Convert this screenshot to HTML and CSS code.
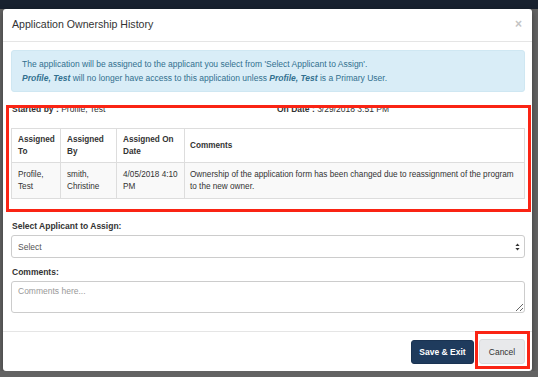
FILE: index.html
```html
<!DOCTYPE html>
<html lang="en">
<head>
    <meta charset="UTF-8">
    <meta name="viewport" content="width=device-width, initial-scale=1.0">
    <title>Application Ownership History</title>
    <link rel="stylesheet" href="styles.css">
</head>
<body>

<div class="page-top"></div>

<div class="modal">
    <div class="modal-header">
        <h1>Application Ownership History</h1>
        <span class="close">&times;</span>
    </div>

    <div class="modal-body">
        <div class="alert">
            The application will be assigned to the applicant you select from 'Select Applicant to Assign'.<br>
            <b><i>Profile, Test</i></b> will no longer have access to this application unless <b><i>Profile, Test</i></b> is a Primary User.
        </div>

        <div class="highlight history">
            <div class="info-row">
                <div><b>Started by :</b> Profile, Test</div>
                <div><b>On Date :</b> 3/29/2018 3:51 PM</div>
            </div>
            <table class="history-table">
                <colgroup>
                    <col class="col-to">
                    <col class="col-by">
                    <col class="col-date">
                    <col>
                </colgroup>
                <thead>
                    <tr>
                        <th>Assigned To</th>
                        <th>Assigned By</th>
                        <th>Assigned On Date</th>
                        <th>Comments</th>
                    </tr>
                </thead>
                <tbody>
                    <tr>
                        <td>Profile, Test</td>
                        <td>smith, Christine</td>
                        <td>4/05/2018 4:10 PM</td>
                        <td>Ownership of the application form has been changed due to reassignment of the program to the new owner.</td>
                    </tr>
                </tbody>
            </table>
        </div>

        <label class="field-label">Select Applicant to Assign:</label>
        <div class="select-box">
            <span>Select</span>
            <svg width="5" height="8" viewBox="0 0 5 8"><path d="M2.5 0.5 L4.6 3 L0.4 3 Z M2.5 7.5 L4.6 5 L0.4 5 Z" fill="#333"/></svg>
        </div>

        <label class="field-label">Comments:</label>
        <textarea class="comments" placeholder="Comments here..."></textarea>
    </div>

    <div class="modal-footer">
        <button class="btn btn-primary">Save &amp; Exit</button>
        <div class="highlight cancel-wrap">
            <button class="btn btn-default">Cancel</button>
        </div>
    </div>
</div>

</body>
</html>
```

FILE: styles.css
```css
* {
    box-sizing: border-box;
}
body {
    font-family: 'Liberation Sans', Arial, sans-serif;
    font-size: 8.5px;
    color: #333;
    background-color: #636363;
    margin: 0;
}
.page-top {
    height: 9px;
    background: #18212f;
}
.modal {
    width: 529px;
    margin-left: 3px;
    background: white;
    border-radius: 3px;
    box-shadow: 0 2px 6px rgba(0, 0, 0, 0.4);
}
.modal-header {
    height: 33px;
    display: flex;
    justify-content: space-between;
    align-items: center;
    padding: 0 10px 2px 9px;
    border-bottom: 1px solid #e5e5e5;
}
.modal-header h1 {
    margin: 0;
    font-size: 10.6px;
    font-weight: normal;
    color: #333;
}
.close {
    font-size: 12px;
    font-weight: bold;
    color: #c4c4c4;
}
.modal-body {
    padding: 8px 7px 18px 8px;
}
.alert {
    background: #d9edf7;
    border: 1px solid #cfe7f2;
    color: #31708f;
    border-radius: 3px;
    padding: 6px 10px;
    line-height: 14px;
}
.highlight {
    border: 3px solid #fa2414;
}
.history {
    margin: 13px -6px 0 -5px;
    padding: 0 3px 10px 2px;
    overflow: hidden;
}
.info-row {
    display: grid;
    grid-template-columns: 265px 1fr;
    margin-top: -6px;
    margin-bottom: 2px;
    line-height: 14px;
    padding-left: 1px;
}
.history-table {
    width: 100%;
    margin-top: 12px;
    border-collapse: collapse;
    table-layout: fixed;
    border: 1px solid #ddd;
    font-size: 8.2px;
    line-height: 11.7px;
}
.col-to {
    width: 49px;
}
.col-by {
    width: 56px;
}
.col-date {
    width: 68px;
}
.history-table th,
.history-table td {
    text-align: left;
    vertical-align: middle;
    border: 1px solid #ddd;
    padding: 5px 4px 5px 6px;
}
.history-table th {
    font-weight: bold;
    height: 34px;
}
.history-table td {
    background: #f9f9f9;
    height: 36px;
}
.history-table td:last-child,
.history-table th:last-child {
    padding-left: 5px;
}
.field-label {
    display: block;
    font-weight: bold;
    line-height: 14px;
    margin: 7px 0 2px 1px;
}
.select-box {
    height: 23px;
    display: flex;
    justify-content: space-between;
    align-items: center;
    padding: 0 4px 0 6px;
    border: 1px solid #ccc;
    border-radius: 3px;
    background: white;
    color: #555;
}
.comments {
    display: block;
    width: 100%;
    height: 32px;
    margin: 0;
    padding: 4px 6px;
    font-family: inherit;
    font-size: 8.5px;
    border: 1px solid #ccc;
    border-radius: 3px;
}
.comments::placeholder {
    color: #999;
}
.modal-footer {
    height: 40px;
    display: flex;
    justify-content: flex-end;
    align-items: flex-start;
    padding: 8px 2px 0 0;
    border-top: 1px solid #e5e5e5;
}
.btn {
    font-family: inherit;
    font-size: 8.5px;
    border-radius: 3px;
    cursor: pointer;
}
.btn-primary {
    width: 63px;
    height: 24px;
    margin-right: 1px;
    background: #1f3b5d;
    border: 1px solid #1a3352;
    color: white;
    font-weight: bold;
}
.btn-default {
    width: 46px;
    height: 25px;
    background: #e8e9eb;
    border: 1px solid #dadcde;
    color: #333;
}
.cancel-wrap {
    margin-top: -9px;
    padding: 5px 2px 2px 1px;
}
```
